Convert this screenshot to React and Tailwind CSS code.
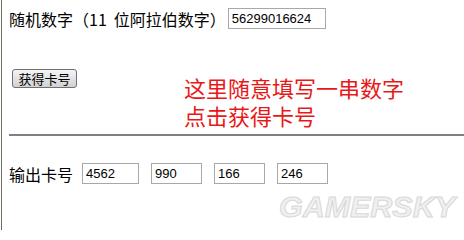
import React from "react";

const cjk = { fontFamily: '"Noto Sans CJK SC", "Noto Sans", sans-serif' };
const num = { fontFamily: '"Liberation Sans", Arial, sans-serif' };

function Box({ value, w }) {
  return (
    <div
      className={`${w} h-[21px] border border-[#a8a8a8] bg-white flex items-center pl-[3px] text-[13px] text-black leading-none`}
      style={num}
    >
      {value}
    </div>
  );
}

export default function App() {
  return (
    <div className="relative w-[464px] h-[230px] bg-white overflow-hidden">
      <div className="ml-[1px] h-full border-l border-[#6e6e5e] flex flex-col">
        <div className="flex items-center mt-[8px] pl-[7px] h-[21px]">
          <span className="text-[16px] leading-none text-black whitespace-nowrap" style={cjk}>
            随机数字（11<span className="ml-[7px]">位阿拉伯数字）</span>
          </span>
          <div className="ml-[2px]">
            <Box value="56299016624" w="w-[98px]" />
          </div>
        </div>

        <div className="flex items-start mt-[40px]">
          <button
            className="ml-[10px] w-[65px] h-[19px] rounded-[3px] border border-[#707070] bg-gradient-to-b from-[#f4f4f4] to-[#d2d2d2] text-[13px] leading-none text-black flex items-center justify-center"
            style={cjk}
          >
            获得卡号
          </button>
          <div
            className="ml-[107px] mt-[4px] text-[22px] leading-[28px] text-[#e81818] whitespace-nowrap"
            style={cjk}
          >
            <div>这里随意填写一串数字</div>
            <div>点击获得卡号</div>
          </div>
        </div>

        <div className="mt-[5px] ml-[7px] h-[2px] bg-[#808080]" />

        <div className="flex items-center mt-[27px] pl-[7px] h-[21px]">
          <span className="text-[16px] leading-none text-black whitespace-nowrap" style={cjk}>
            输出卡号
          </span>
          <div className="ml-[9px] flex gap-[12px]">
            <Box value="4562" w="w-[57px]" />
            <Box value="990" w="w-[51px]" />
            <Box value="166" w="w-[51px]" />
            <Box value="246" w="w-[51px]" />
          </div>
        </div>
      </div>

      <div
        className="absolute left-[279px] top-[186px] text-[29px] font-bold italic text-[#f0f0f0] tracking-[0px]"
        style={{ ...num, WebkitTextStroke: "1px #d8d8d8", transform: "scaleX(1.05)", transformOrigin: "left" }}
      >
        GAMERSKY
      </div>
    </div>
  );
}
